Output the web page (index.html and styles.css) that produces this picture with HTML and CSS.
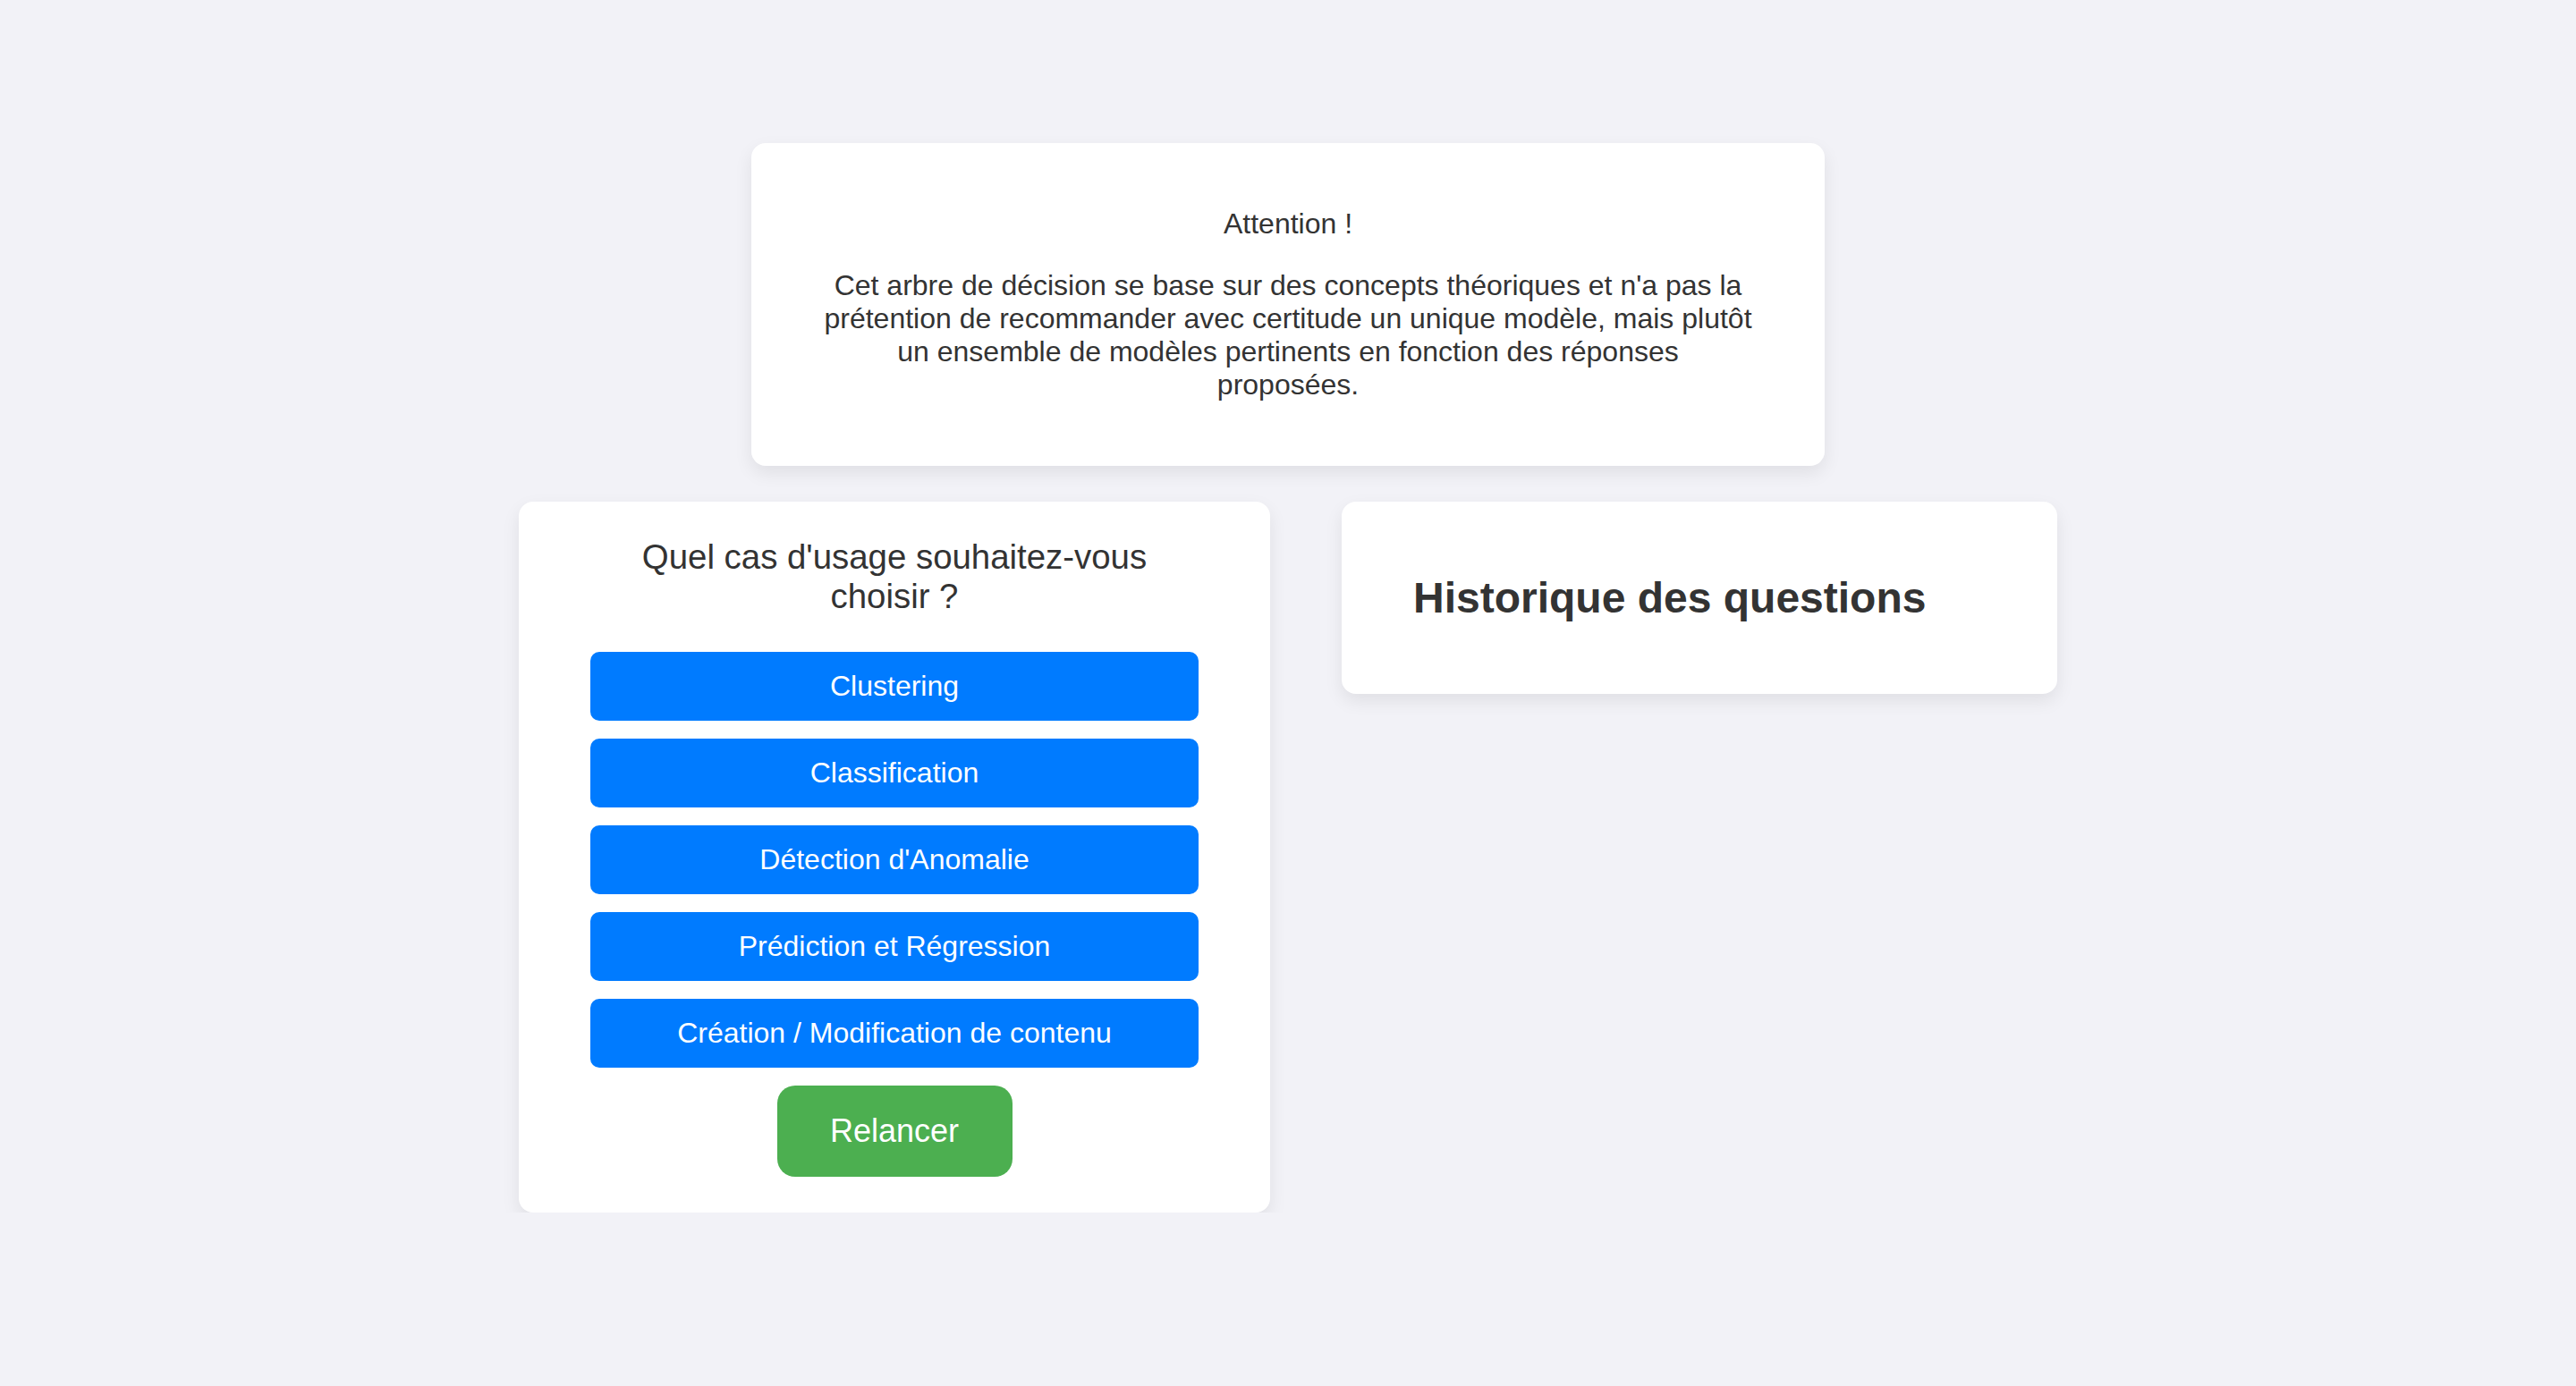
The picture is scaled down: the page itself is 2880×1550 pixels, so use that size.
FILE: index.html
```html
<!DOCTYPE html>
<html lang="fr">
<head>
<meta charset="utf-8">
<title>Arbre de décision</title>
<link rel="stylesheet" href="styles.css">
</head>
<body>
<main class="page">
  <section class="card warning">
    <p class="warning-title">Attention !</p>
    <p class="warning-text">Cet arbre de décision se base sur des concepts théoriques et n'a pas la prétention de recommander avec certitude un unique modèle, mais plutôt un ensemble de modèles pertinents en fonction des réponses proposées.</p>
  </section>
  <div class="columns">
    <section class="card question">
      <p class="question-title">Quel cas d'usage souhaitez-vous choisir ?</p>
      <div class="options">
        <button class="option">Clustering</button>
        <button class="option">Classification</button>
        <button class="option">Détection d'Anomalie</button>
        <button class="option">Prédiction et Régression</button>
        <button class="option">Création / Modification de contenu</button>
      </div>
      <button class="restart">Relancer</button>
    </section>
    <section class="card history">
      <h2 class="history-title">Historique des questions</h2>
    </section>
  </div>
</main>
</body>
</html>
```
FILE: styles.css
```css
html, body {
  margin: 0;
  padding: 0;
}
body {
  background: #f2f2f7;
  font-family: "Liberation Sans", Arial, sans-serif;
  color: #333333;
}
.page {
  display: flex;
  flex-direction: column;
  align-items: center;
  padding-top: 160px;
  gap: 40px;
}
.card {
  background: #ffffff;
  border-radius: 16px;
  box-shadow: 0 8px 20px rgba(0, 0, 0, 0.08);
  box-sizing: border-box;
}
.warning {
  width: 1200px;
  padding: 40px 80px;
  text-align: center;
  font-size: 32px;
}
.warning p {
  margin: 32px 0;
}
.columns {
  display: flex;
  align-items: flex-start;
  gap: 80px;
}
.question {
  width: 840px;
  padding: 40px 80px;
  display: flex;
  flex-direction: column;
  align-items: center;
}
.question-title {
  margin: 0 0 40px;
  font-size: 38.4px;
  text-align: center;
}
.options {
  display: flex;
  flex-direction: column;
  gap: 20px;
  width: 100%;
}
.option {
  display: block;
  width: 100%;
  height: 77px;
  border: none;
  border-radius: 10px;
  background: #007bff;
  color: #ffffff;
  font-family: "Liberation Sans", Arial, sans-serif;
  font-size: 32px;
  padding: 0;
}
.restart {
  margin-top: 20px;
  border: none;
  border-radius: 20px;
  background: #4caf50;
  color: #ffffff;
  font-family: "Liberation Sans", Arial, sans-serif;
  font-size: 36px;
  width: 263px;
  height: 102px;
  padding: 0;
}
.history {
  width: 800px;
  padding: 80px;
}
.history-title {
  margin: 0;
  font-size: 48px;
  font-weight: bold;
}
```
